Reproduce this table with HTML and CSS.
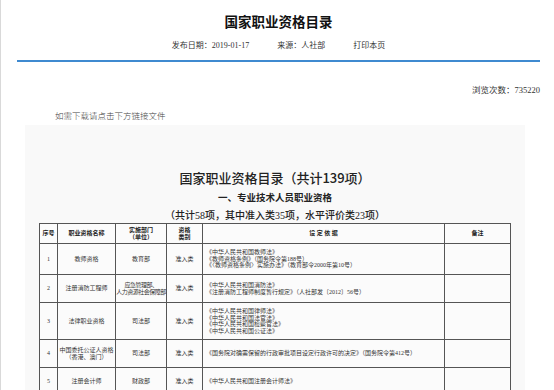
FILE: index.html
```html
<!DOCTYPE html>
<html lang="zh-CN">
<head>
  <meta charset="UTF-8">
  <meta name="viewport" content="width=device-width, initial-scale=1.0">
  <title>国家职业资格目录</title>
  <link rel="stylesheet" href="styles.css">
</head>
<body>
  <div class="page">
    <div class="article-head">
      <h1>国家职业资格目录</h1>
      <div class="meta">
        <span>发布日期：2019-01-17</span>
        <span>来源：人社部</span>
        <span>打印本页</span>
      </div>
    </div>

    <div class="views">浏览次数：735220</div>
    <p class="note">如需下载请点击下方链接文件</p>

    <!-- 附件截图 -->
    <div class="scan">
      <h2>国家职业资格目录（共计139项）</h2>
      <h3>一、专业技术人员职业资格</h3>
      <div class="summary">（共计58项，其中准入类35项，水平评价类23项）</div>

      <table class="catalog">
        <colgroup>
          <col style="width:18px">
          <col style="width:58px">
          <col style="width:51px">
          <col style="width:36px">
          <col style="width:242px">
          <col style="width:66px">
        </colgroup>
        <tr class="head-row">
          <th>序号</th>
          <th>职业资格名称</th>
          <th>实施部门<br>（单位）</th>
          <th>资格<br>类别</th>
          <th>设 定 依 据</th>
          <th>备注</th>
        </tr>
        <tr class="r1">
          <td>1</td>
          <td>教师资格</td>
          <td>教育部</td>
          <td>准入类</td>
          <td class="basis">《中华人民共和国教师法》<br>《教师资格条例》（国务院令第188号）<br>《〈教师资格条例〉实施办法》（教育部令2000年第10号）</td>
          <td></td>
        </tr>
        <tr class="r2">
          <td>2</td>
          <td>注册消防工程师</td>
          <td class="tight">应急管理部、<br>人力资源社会保障部</td>
          <td>准入类</td>
          <td class="basis">《中华人民共和国消防法》<br>《注册消防工程师制度暂行规定》（人社部发〔2012〕56号）</td>
          <td></td>
        </tr>
        <tr class="r3">
          <td>3</td>
          <td>法律职业资格</td>
          <td>司法部</td>
          <td>准入类</td>
          <td class="basis">《中华人民共和国律师法》<br>《中华人民共和国法官法》<br>《中华人民共和国检察官法》<br>《中华人民共和国公证法》</td>
          <td></td>
        </tr>
        <tr class="r4">
          <td>4</td>
          <td>中国委托公证人资格<br>（香港、澳门）</td>
          <td>司法部</td>
          <td>准入类</td>
          <td class="basis">《国务院对确需保留的行政审批项目设定行政许可的决定》（国务院令第412号）</td>
          <td></td>
        </tr>
        <tr class="r5">
          <td>5</td>
          <td>注册会计师</td>
          <td>财政部</td>
          <td>准入类</td>
          <td class="basis">《中华人民共和国注册会计师法》</td>
          <td></td>
        </tr>
      </table>
    </div>
  </div>
</body>
</html>
```

FILE: styles.css
```css
body {
  margin: 0;
  background: #fff;
  color: #222;
  font-family: "Liberation Serif", "Noto Sans CJK SC", serif;
}

.page {
  height: 390px;
  border-left: 1px solid #d9d9d9;
  overflow: hidden;
}

.article-head {
  margin: 0 14px 0 16px;
  padding: 12px 0 8px;
  border-bottom: 2px solid #3f8ad0;
  text-align: center;
}

.article-head h1 {
  margin: 0;
  font-family: "Noto Sans CJK SC", sans-serif;
  font-size: 13.5px;
  line-height: 18px;
  font-weight: bold;
  color: #111;
}

.meta {
  margin-top: 10px;
  display: flex;
  justify-content: center;
  gap: 28px;
  font-size: 8px;
  line-height: 12px;
  color: #333;
}

.views {
  margin: 22px 14px 0 0;
  text-align: right;
  font-size: 8.5px;
  line-height: 12px;
  color: #333;
}

.note {
  margin: 14px 0 0 54px;
  font-size: 8.5px;
  line-height: 12px;
  color: #444;
  font-weight: 300;
}

.scan {
  margin: 3px 0 0 24px;
  width: 500px;
  height: 300px;
  padding-top: 44px;
  background: #f9f9f9;
  text-align: center;
  color: #222;
}

.scan h2 {
  margin: 0;
  font-family: "Noto Sans CJK SC", sans-serif;
  font-size: 13px;
  line-height: 18px;
  font-weight: 500;
}

.scan h3 {
  margin: 4px 0 0;
  font-family: "Noto Sans CJK SC", sans-serif;
  font-size: 9.5px;
  line-height: 12px;
  font-weight: bold;
}

.summary {
  margin-top: 7px;
  font-size: 10px;
  line-height: 12px;
  font-weight: 500;
}

.catalog {
  margin: 1px 0 0 14px;
  width: 471px;
  table-layout: fixed;
  border-collapse: collapse;
  background: #fbfbfb;
  font-family: "Liberation Serif", "Noto Sans CJK SC", serif;
  font-size: 6px;
  line-height: 6.5px;
  color: #333;
}

.catalog th,
.catalog td {
  border: 1px solid #555;
  padding: 0;
  text-align: center;
  vertical-align: middle;
  white-space: nowrap;
}

.catalog th {
  font-weight: bold;
  color: #222;
}

.catalog td.basis {
  text-align: left;
  padding-left: 3px;
}

.catalog td.tight {
  letter-spacing: -0.5px;
}

.head-row { height: 20px; }
.r1 { height: 31px; }
.r2 { height: 28px; }
.r3 { height: 37px; }
.r4 { height: 28px; }
.r5 { height: 28px; }
```
